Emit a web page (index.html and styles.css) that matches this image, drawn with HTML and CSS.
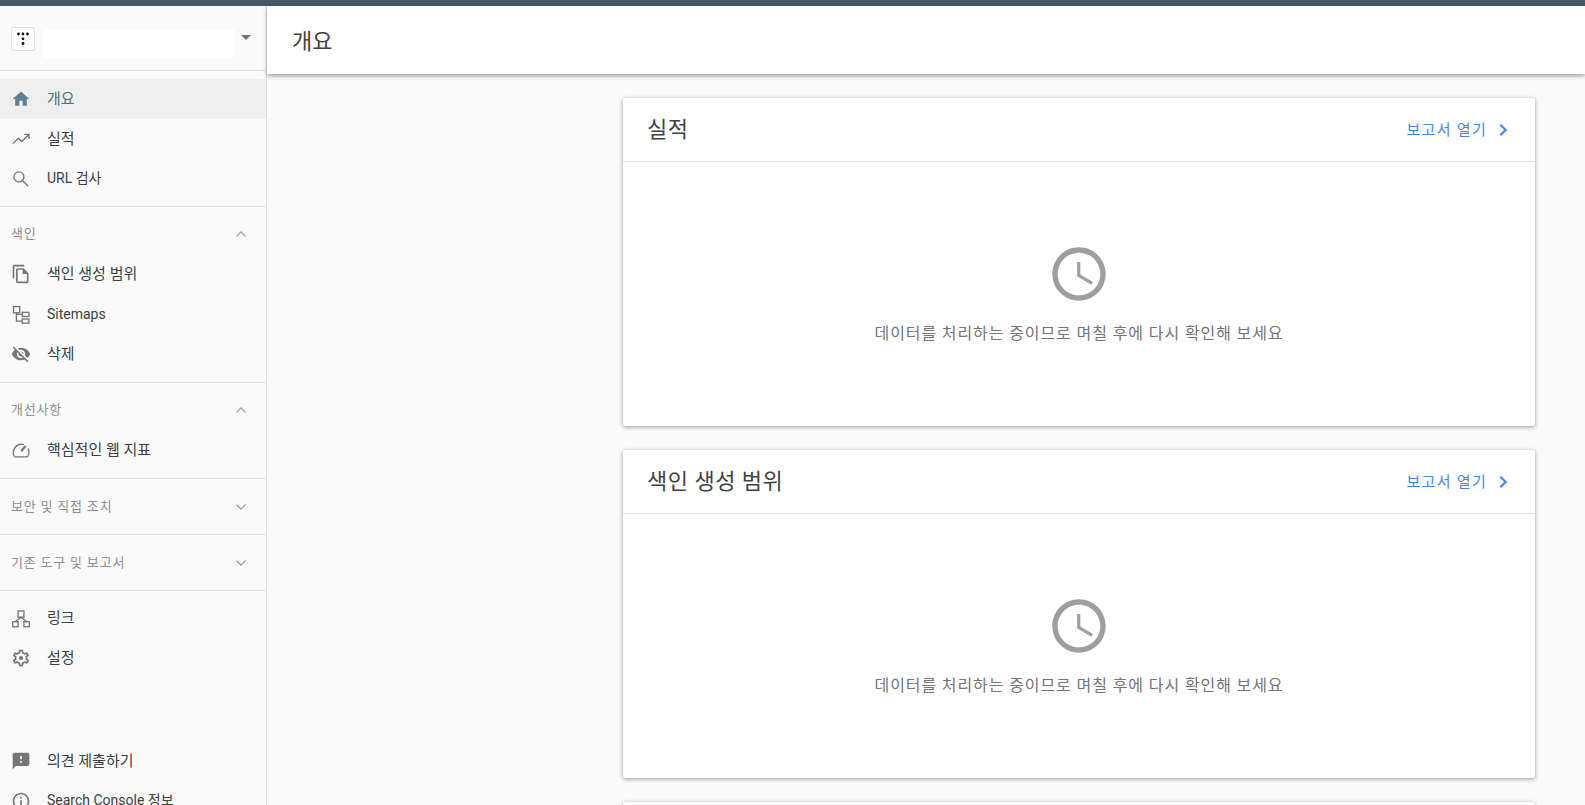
FILE: index.html
```html
<!DOCTYPE html>
<html lang="ko">
<head>
  <meta charset="UTF-8" />
  <title>개요 - Search Console</title>
  <link rel="stylesheet" href="styles.css">
</head>
<body>
  <div class="topbar"></div>
  <div class="app">
    <aside class="sidebar">
      <div class="property">
        <div class="property-logo">
          <svg viewBox="0 0 24 24" width="24" height="24"><g fill="#111"><circle cx="7.500" cy="7" r="1.400"/><circle cx="12" cy="7" r="1.400"/><circle cx="16.500" cy="7" r="1.400"/><circle cx="12" cy="11.800" r="1.400"/><circle cx="12" cy="16.500" r="1.400"/></g></svg>
        </div>
        <div class="property-name"></div>
        <div class="property-arrow"></div>
      </div>

      <nav class="nav-group nav-group--first">
        <a class="nav-item active" href="#">
          <svg class="nav-icon nav-icon--home" viewBox="0 0 24 24"><path d="M10 20v-6h4v6h5v-8h3L12 3 2 12h3v8z"/></svg>
          <span class="ko">개요</span>
        </a>
        <a class="nav-item" href="#">
          <svg class="nav-line" viewBox="0 0 24 24"><path d="M2.500 17.500l6.500-6.500 4 4 8-8M16 6.500h5.500V12"/></svg>
          <span class="ko">실적</span>
        </a>
        <a class="nav-item" href="#">
          <svg class="nav-line" viewBox="0 0 24 24"><circle cx="9.500" cy="9.500" r="6"/><path d="M14 14l6.500 6.500"/></svg>
          <span>URL 검사</span>
        </a>
      </nav>

      <section class="nav-section">
        <div class="nav-heading nav-heading--open">
          <span>색인</span>
          <svg class="chevron" viewBox="0 0 24 24"><path d="M12 8.500l-6 6 1 1 5-5 5 5 1-1z"/></svg>
        </div>
        <a class="nav-item" href="#">
          <svg class="nav-icon" viewBox="0 0 24 24"><path d="M16 1H4c-1.100 0-2 .9-2 2v14h2V3h12V1zm-1 4H8c-1.100 0-1.990.9-1.990 2L6 21c0 1.100.89 2 1.990 2H19c1.100 0 2-.9 2-2V11l-6-6zM8 21V7h6v5h5v9H8z"/></svg>
          <span class="ko">색인 생성 범위</span>
        </a>
        <a class="nav-item" href="#">
          <svg class="nav-line" viewBox="0 0 24 24"><rect x="3" y="3" width="7.500" height="7.500"/><rect x="13.500" y="10" width="8" height="5"/><rect x="13.500" y="18" width="8" height="5"/><path d="M6.500 10.500v10h7M6.500 12.500h7"/></svg>
          <span class="latin">Sitemaps</span>
        </a>
        <a class="nav-item" href="#">
          <svg class="nav-icon" viewBox="0 0 24 24"><path d="M12 7c2.760 0 5 2.240 5 5 0 .65-.13 1.260-.36 1.830l2.920 2.920c1.510-1.260 2.700-2.890 3.430-4.750-1.730-4.390-6-7.500-11-7.500-1.400 0-2.740.25-3.980.7l2.160 2.160C10.740 7.130 11.350 7 12 7zM2 4.270l2.280 2.280.46.46C3.080 8.300 1.780 10.020 1 12c1.730 4.390 6 7.500 11 7.500 1.550 0 3.030-.3 4.380-.84l.42.42L19.730 22 21 20.730 3.270 3 2 4.270zM7.530 9.800l1.550 1.550c-.05.21-.08.43-.08.65 0 1.660 1.340 3 3 3 .22 0 .44-.03.65-.08l1.550 1.550c-.67.33-1.410.53-2.200.53-2.760 0-5-2.240-5-5 0-.79.2-1.530.53-2.200zm4.310-.78l3.150 3.150.02-.16c0-1.660-1.340-3-3-3l-.17.01z"/></svg>
          <span class="ko">삭제</span>
        </a>
      </section>

      <section class="nav-section">
        <div class="nav-heading nav-heading--open">
          <span>개선사항</span>
          <svg class="chevron" viewBox="0 0 24 24"><path d="M12 8.500l-6 6 1 1 5-5 5 5 1-1z"/></svg>
        </div>
        <a class="nav-item" href="#">
          <svg class="nav-line" viewBox="0 0 24 24"><path d="M15.500 5.500A10 10 0 0 0 3.800 19.500c.3.5.7.8 1.200.8h14c.5 0 .9-.3 1.200-.8A10 10 0 0 0 20.500 10"/><path d="M17.500 7l-5.200 6.500" stroke-width="2.600"/></svg>
          <span class="ko">핵심적인 웹 지표</span>
        </a>
      </section>

      <section class="nav-section nav-section--closed">
        <div class="nav-heading">
          <span>보안 및 직접 조치</span>
          <svg class="chevron" viewBox="0 0 24 24"><path d="M12 15.500l6-6-1-1-5 5-5-5-1 1z"/></svg>
        </div>
      </section>

      <section class="nav-section nav-section--closed">
        <div class="nav-heading">
          <span>기존 도구 및 보고서</span>
          <svg class="chevron" viewBox="0 0 24 24"><path d="M12 15.500l6-6-1-1-5 5-5-5-1 1z"/></svg>
        </div>
      </section>

      <nav class="nav-group nav-group--plain">
        <a class="nav-item" href="#">
          <svg class="nav-line" viewBox="0 0 24 24"><rect x="8.500" y="3.500" width="7" height="7.500"/><rect x="2" y="16.500" width="6.500" height="6"/><rect x="15.500" y="16.500" width="6.500" height="6"/><path d="M12 11l-7 5.500M12 11l7 5.500"/></svg>
          <span class="ko">링크</span>
        </a>
        <a class="nav-item" href="#">
          <svg class="nav-icon" viewBox="0 0 24 24"><path d="M19.430 12.980c.04-.32.07-.64.07-.98 0-.34-.03-.66-.07-.98l2.110-1.650c.19-.15.24-.42.12-.64l-2-3.460c-.09-.16-.26-.25-.44-.25-.06 0-.12.01-.17.03l-2.490 1c-.52-.4-1.080-.73-1.690-.98l-.38-2.650C14.460 2.180 14.250 2 14 2h-4c-.25 0-.46.18-.49.42l-.38 2.650c-.61.25-1.170.59-1.690.98l-2.490-1c-.06-.02-.12-.03-.18-.03-.17 0-.34.09-.43.25l-2 3.460c-.13.22-.07.49.12.64l2.110 1.650c-.04.32-.07.65-.07.98 0 .33.03.66.07.98l-2.110 1.650c-.19.15-.24.42-.12.64l2 3.460c.09.16.26.25.44.25.06 0 .12-.01.17-.03l2.490-1c.52.4 1.080.73 1.690.98l.38 2.650c.03.24.24.42.49.42h4c.25 0 .46-.18.49-.42l.38-2.650c.61-.25 1.170-.59 1.690-.98l2.490 1c.06.02.12.03.18.03.17 0 .34-.09.43-.25l2-3.460c.12-.22.07-.49-.12-.64l-2.110-1.650zm-1.980-1.710c.04.31.05.52.05.73 0 .21-.02.43-.05.73l-.14 1.130.89.7 1.080.84-.7 1.210-1.270-.51-1.040-.42-.9.68c-.43.32-.84.56-1.250.73l-1.060.43-.16 1.130-.2 1.350h-1.400l-.19-1.350-.16-1.130-1.060-.43c-.43-.18-.83-.41-1.230-.71l-.91-.7-1.060.43-1.270.51-.7-1.210 1.080-.84.89-.7-.14-1.130c-.03-.31-.05-.54-.05-.74s.02-.43.05-.73l.14-1.130-.89-.7-1.080-.84.7-1.210 1.270.51 1.040.42.9-.68c.43-.32.84-.56 1.250-.73l1.060-.43.16-1.130.2-1.350h1.390l.19 1.350.16 1.130 1.060.43c.43.18.83.41 1.230.71l.91.7 1.060-.43 1.270-.51.7 1.210-1.070.85-.89.7.14 1.130z"/><circle cx="12" cy="12" r="2.500"/></svg>
          <span class="ko">설정</span>
        </a>
      </nav>

      <nav class="nav-bottom">
        <a class="nav-item" href="#">
          <svg class="nav-icon" viewBox="0 0 24 24"><path d="M20 2H4c-1.100 0-1.990.9-1.990 2L2 22l4-4h14c1.100 0 2-.9 2-2V4c0-1.100-.9-2-2-2zm-7 12h-2v-2h2v2zm0-4h-2V6h2v4z"/></svg>
          <span class="ko">의견 제출하기</span>
        </a>
        <a class="nav-item" href="#">
          <svg class="nav-icon" viewBox="0 0 24 24"><path d="M11 7h2v2h-2zm0 4h2v6h-2zm1-9C6.480 2 2 6.480 2 12s4.480 10 10 10 10-4.480 10-10S17.520 2 12 2zm0 18c-4.410 0-8-3.590-8-8s3.590-8 8-8 8 3.590 8 8-3.590 8-8 8z"/></svg>
          <span>Search Console 정보</span>
        </a>
      </nav>
    </aside>

    <div class="content">
      <header class="page-header"><h1>개요</h1></header>
      <main class="cards">
        <section class="card">
          <div class="card-header">
            <h2>실적</h2>
            <a class="report-link" href="#">보고서 열기
              <svg viewBox="0 0 24 24"><path d="M9.300 6.700L14.600 12l-5.300 5.300"/></svg>
            </a>
          </div>
          <div class="card-body">
            <svg class="clock" viewBox="0 0 24 24"><path d="M11.990 2C6.470 2 2 6.480 2 12s4.470 10 9.990 10C17.520 22 22 17.520 22 12S17.520 2 11.990 2zM12 20c-4.420 0-8-3.580-8-8s3.580-8 8-8 8 3.580 8 8-3.580 8-8 8z"/><path class="clock-hands" d="M11.900 7.500v5l5 3"/></svg>
            <p>데이터를 처리하는 중이므로 며칠 후에 다시 확인해 보세요</p>
          </div>
        </section>
        <section class="card">
          <div class="card-header">
            <h2>색인 생성 범위</h2>
            <a class="report-link" href="#">보고서 열기
              <svg viewBox="0 0 24 24"><path d="M9.300 6.700L14.600 12l-5.300 5.300"/></svg>
            </a>
          </div>
          <div class="card-body">
            <svg class="clock" viewBox="0 0 24 24"><path d="M11.990 2C6.470 2 2 6.480 2 12s4.470 10 9.990 10C17.520 22 22 17.520 22 12S17.520 2 11.990 2zM12 20c-4.420 0-8-3.580-8-8s3.580-8 8-8 8 3.580 8 8-3.580 8-8 8z"/><path class="clock-hands" d="M11.900 7.500v5l5 3"/></svg>
            <p>데이터를 처리하는 중이므로 며칠 후에 다시 확인해 보세요</p>
          </div>
        </section>
        <section class="card"></section>
      </main>
    </div>
  </div>
</body>
</html>
```

FILE: styles.css
```css
* { margin: 0; padding: 0; box-sizing: border-box; }
body {
  height: 100vh;
  overflow: hidden;
  background-color: #fafafa;
  color: #333;
  font-family: Roboto, 'Noto Sans CJK KR', sans-serif;
  font-size: 14px;
}

a {
  color: inherit;
  text-decoration: none;
}

.topbar {
  height: 6px;
  background-color: #455a64;
}

.app {
  display: flex;
  height: 799px;
}

/* sidebar */
.sidebar {
  flex: none;
  width: 267px;
  height: 815px;
  border-right: 1px solid #e0e0e0;
  background-color: #fafafa;
}

.property {
  display: flex;
  align-items: center;
  height: 65px;
  padding-left: 11px;
  border-bottom: 1px solid #e0e0e0;
}

.property-logo {
  width: 24px;
  height: 24px;
  margin-top: 2px;
  border: 1px solid #e0e0e0;
  border-radius: 2px;
  background-color: #fff;
}

.property-logo svg {
  display: block;
  margin: -1px;
}

.property-name {
  width: 191px;
  height: 29px;
  margin: 11px 0 0 8px;
  background-color: #fff;
}

.property-arrow {
  width: 0;
  height: 0;
  margin: -2px 0 0 7px;
  border-top: 5px solid #757575;
  border-left: 5px solid transparent;
  border-right: 5px solid transparent;
}

.nav-group {
  padding: 7px 0;
  border-bottom: 1px solid #e0e0e0;
}

.nav-group--first {
  padding: 8px 0 7px;
}

.nav-group--plain {
  padding: 7px 0 0;
  border-bottom: 0;
}

.nav-item {
  display: flex;
  align-items: center;
  height: 40px;
  padding-left: 11px;
  color: #3c4043;
  line-height: 20px;
}

.nav-item span {
  margin-top: -2px;
}

.nav-item .ko {
  margin-top: -1px;
  font-size: 15px;
}

.nav-item .latin {
  margin-top: 0;
}

.nav-item.active {
  background-color: #eee;
  color: #546e7a;
}

.nav-icon {
  flex: none;
  width: 20px;
  height: 20px;
  margin-right: 16px;
  fill: #757575;
}

.nav-icon--home {
  fill: #5f7f93;
}

.nav-line {
  flex: none;
  width: 20px;
  height: 20px;
  margin-right: 16px;
  fill: none;
  stroke: #757575;
  stroke-width: 1.600;
}

.nav-section {
  padding-bottom: 8px;
  border-bottom: 1px solid #e0e0e0;
}

.nav-section--closed {
  padding-bottom: 0;
}

.nav-heading {
  display: flex;
  align-items: center;
  justify-content: space-between;
  height: 55px;
  padding: 0 15px 0 11px;
  color: #8a8f94;
  font-size: 13px;
  letter-spacing: 0.8px;
  line-height: 20px;
}

.nav-heading--open {
  height: 47px;
  padding-top: 6px;
}

.chevron {
  width: 20px;
  height: 20px;
  fill: #9e9e9e;
}

.nav-bottom {
  margin-top: 63px;
}

/* main column */
.content {
  flex: 1;
  min-width: 0;
}

.page-header {
  position: relative;
  z-index: 1;
  display: flex;
  align-items: center;
  height: 68px;
  padding-left: 25px;
  background-color: #fff;
  box-shadow: 0 2px 4px rgba(0, 0, 0, 0.35);
}

.page-header h1 {
  margin-top: 3px;
  color: #424242;
  font-size: 22px;
  font-weight: 400;
  line-height: 30px;
}

.cards {
  display: flex;
  flex-direction: column;
  align-items: flex-end;
  gap: 24px;
  padding: 24px 50px 0 0;
}

.card {
  flex: none;
  width: 912px;
  height: 328px;
  border-radius: 2px;
  background-color: #fff;
  box-shadow: 0 1px 4px rgba(0, 0, 0, 0.4);
}

.card-header {
  display: flex;
  align-items: center;
  justify-content: space-between;
  height: 64px;
  padding: 0 20px 0 24px;
  border-bottom: 1px solid #e0e0e0;
}

.card-header h2 {
  color: #424242;
  font-size: 22px;
  font-weight: 400;
  letter-spacing: 0.5px;
  line-height: 30px;
}

.report-link {
  display: flex;
  align-items: center;
  color: #4285f4;
  font-size: 15px;
  letter-spacing: 1.300px;
  line-height: 20px;
  white-space: nowrap;
}

.report-link svg {
  width: 24px;
  height: 24px;
  margin-left: 4px;
  fill: none;
  stroke: #4285f4;
  stroke-width: 2.200;
}

.card-body {
  display: flex;
  flex-direction: column;
  align-items: center;
  padding-top: 80px;
  color: #757575;
  font-size: 16px;
  letter-spacing: 0.9px;
}

.clock {
  width: 64px;
  height: 64px;
  fill: #9e9e9e;
}

.clock-hands {
  fill: none;
  stroke: #9e9e9e;
  stroke-width: 1.200;
}

.card-body p {
  margin-top: 14px;
}
```
